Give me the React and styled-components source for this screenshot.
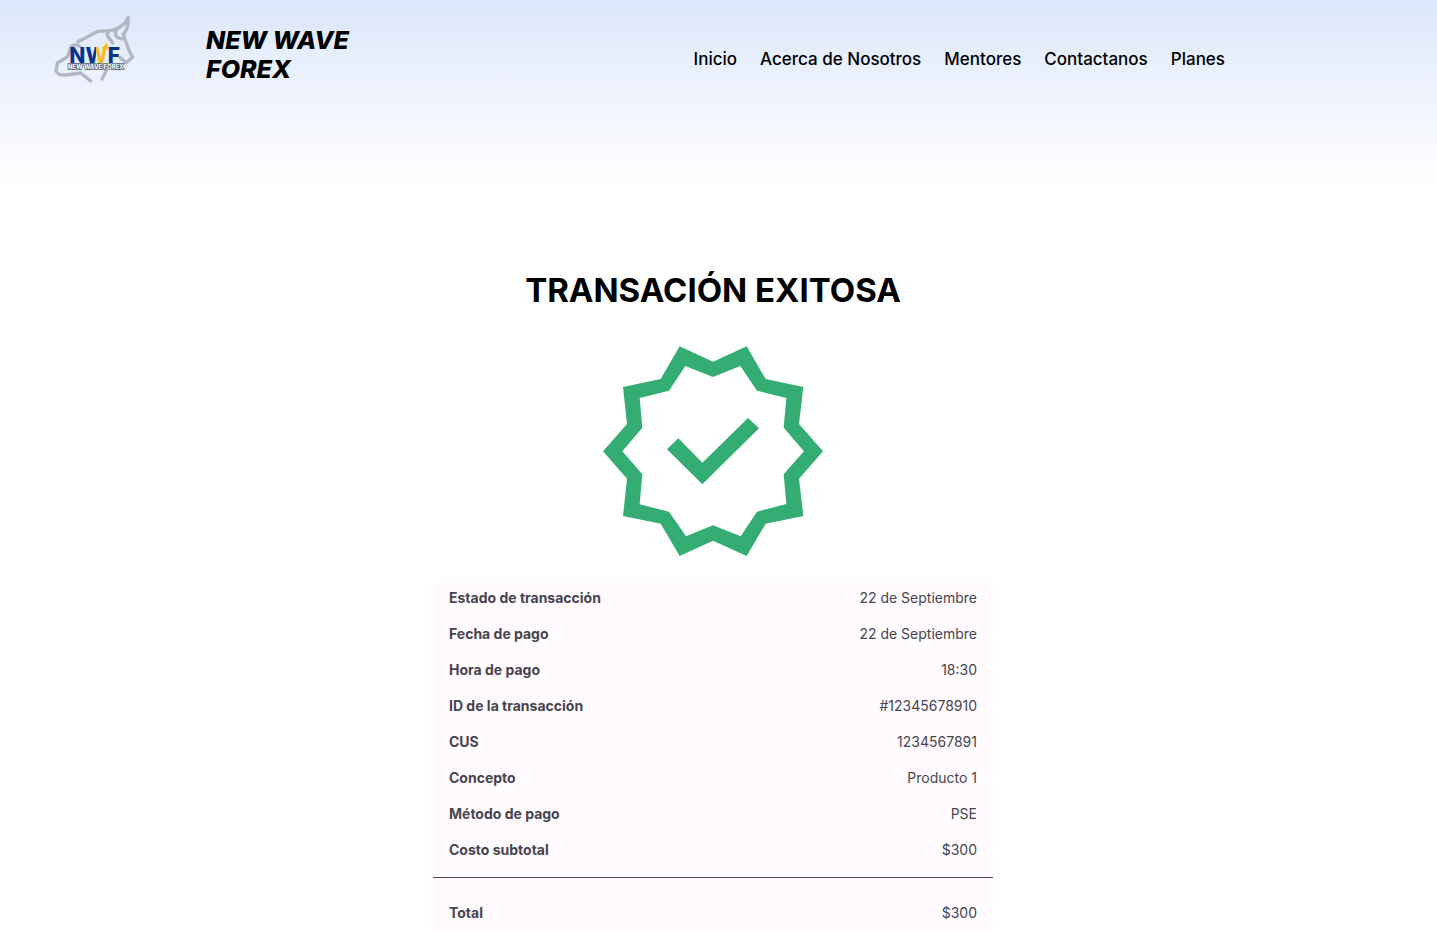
import React from "react";
import styled, { createGlobalStyle } from "styled-components";

const GlobalStyle = createGlobalStyle`
  *, *::before, *::after { box-sizing: border-box; }
  html { overflow-x: hidden; }
  body {
    margin: 0;
    background: #fff;
    color: #000;
    font-family: Inter, "Liberation Sans", sans-serif;
  }
`;

const Page = styled.div`
  background: linear-gradient(180deg, #dbe6fb 0, #f0f4fe 100px, #ffffff 190px);
`;

const Header = styled.header`
  display: flex;
  align-items: center;
  padding: 12px 212px 0 50px;
  min-height: 98px;
`;

const LogoLink = styled.a`
  display: block;
  width: 90px;
  height: 76px;
  margin-bottom: 8px;
  flex: none;
  svg { display: block; }
`;

const Brand = styled.p`
  margin: 0 0 0 66px;
  width: 160px;
  font-size: 25px;
  font-weight: 800;
  font-style: italic;
  line-height: 29px;
`;

const Nav = styled.nav`
  display: flex;
  gap: 23px;
  margin-left: auto;
  margin-top: 8px;
`;

const NavLink = styled.a`
  color: #000;
  font-size: 17px;
  font-weight: 500;
  line-height: 24px;
  text-decoration: none;
  white-space: nowrap;
`;

const Main = styled.main`
  display: flex;
  flex-direction: column;
  align-items: center;
  padding: 172px 11px 0 0;
`;

const Title = styled.h1`
  margin: 0;
  font-size: 33px;
  font-weight: 700;
  line-height: 40px;
  text-align: center;
`;

const Badge = styled.svg`
  display: block;
  width: 220px;
  height: 210px;
  margin: 36px 0 24px;
`;

const Receipt = styled.table`
  width: 100%;
  max-width: 560px;
  border-collapse: collapse;
  border-radius: 4px;
  background: #fffbff;
  color: #48454e;
  font-size: 14px;
  line-height: 20px;
`;

const Label = styled.th`
  padding: 8px 16px;
  font-weight: 700;
  text-align: left;
`;

const Value = styled.td`
  padding: 8px 16px;
  font-weight: 400;
  text-align: right;
`;

const Row = styled.tr`
  &:last-child > * { padding-bottom: 17px; }
`;

const TotalRow = styled.tr`
  border-top: 1px solid #48454e;
  > * { padding-top: 25px; }
`;

const links = ["Inicio", "Acerca de Nosotros", "Mentores", "Contactanos", "Planes"];

const details = [
  ["Estado de transacción", "22 de Septiembre"],
  ["Fecha de pago", "22 de Septiembre"],
  ["Hora de pago", "18:30"],
  ["ID de la transacción", "#12345678910"],
  ["CUS", "1234567891"],
  ["Concepto", "Producto 1"],
  ["Método de pago", "PSE"],
  ["Costo subtotal", "$300"],
];

function Logo() {
  return (
    <svg width="90" height="76" viewBox="0 0 270 228" role="img" aria-label="New Wave Forex">
      <defs>
        <linearGradient id="wave" gradientUnits="userSpaceOnUse" x1="100" y1="0" x2="180" y2="0">
          <stop offset="0.46" stopColor="#08328c" />
          <stop offset="0.46" stopColor="#f5bd20" />
        </linearGradient>
      </defs>
      <g fill="none" stroke="#b2b6c1" strokeWidth="10" strokeLinejoin="round" strokeLinecap="round">
        <path d="M84 86 L144 55 L180 53 Q194 50 206 44 Q226 34 234 14 Q238 42 220 64 L226 82 L239 117 L248 132 L229 149 L210 134" />
        <path d="M175 56 Q168 68 180 78 L188 90 M200 50 Q191 64 203 74 L216 78" />
        <path d="M90 100 Q74 91 64 100 L52 132 L22 150 L18 174 L28 185 L48 186 L92 180 L122 204" />
        <path d="M170 170 L156 198" />
      </g>
      <text x="58" y="149" fontFamily="Inter, sans-serif" fontWeight="800" fontSize="63" fill="#08328c">
        N<tspan fill="url(#wave)">W</tspan>F
      </text>
      <path d="M156 104 L170 89 L178 110 Z" fill="#f5bd20" />
      <text x="54" y="168" fontFamily="Inter, sans-serif" fontSize="18" fontWeight="800" fill="#f6f7fb" stroke="#50545e" strokeWidth="4" paintOrder="stroke">NEW WAVE FOREX</text>
    </svg>
  );
}

export default function App() {
  return (
    <Page>
      <GlobalStyle />
      <Header>
        <LogoLink href="#inicio"><Logo /></LogoLink>
        <Brand>NEW WAVE FOREX</Brand>
        <Nav aria-label="Principal">
          {links.map((link) => (
            <NavLink key={link} href="#">{link}</NavLink>
          ))}
        </Nav>
      </Header>
      <Main>
        <Title>TRANSACIÓN EXITOSA</Title>
        <Badge viewBox="24 33 660 630" aria-hidden="true">
          <path
            fill="#33ad72"
            fillRule="evenodd"
            d="M254 34 L354 80 L455 34 L512 132 L625 156 L612 267 L684 349 L612 431 L625 543 L512 566 L455 663 L354 617 L254 663 L197 566 L84 543 L96 431 L24 349 L96 267 L84 156 L197 132Z M271 93 L222 167 L134 189 L142 278 L82 349 L142 418 L134 508 L222 530 L273 604 L354 571 L437 604 L486 530 L574 507 L566 418 L627 349 L566 278 L574 189 L486 167 L436 93 L354 126Z"
          />
          <path fill="#33ad72" d="M216 343 L250 310 L322 383 L459 249 L492 280 L322 448Z" />
        </Badge>
        <Receipt>
          <tbody>
            {details.map(([label, value]) => (
              <Row key={label}>
                <Label scope="row">{label}</Label>
                <Value>{value}</Value>
              </Row>
            ))}
          </tbody>
          <tfoot>
            <TotalRow>
              <Label scope="row">Total</Label>
              <Value>$300</Value>
            </TotalRow>
          </tfoot>
        </Receipt>
      </Main>
    </Page>
  );
}
